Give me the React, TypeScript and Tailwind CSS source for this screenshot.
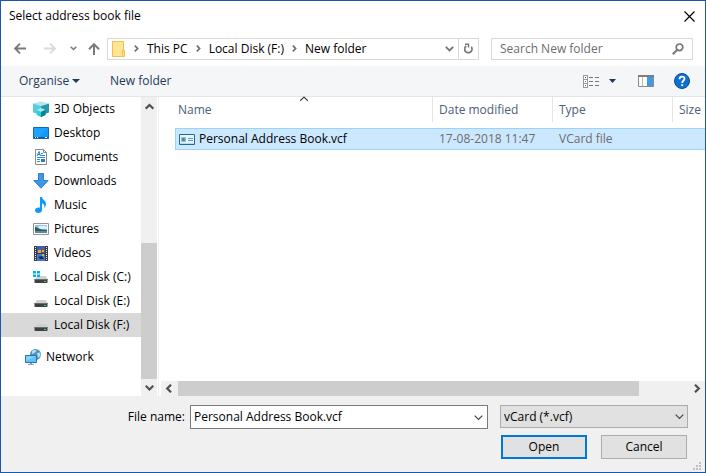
import type { ReactNode } from 'react'

interface Place {
  name: string
  icon: ReactNode
  selected?: boolean
}

const crumbs = ['This PC', 'Local Disk (F:)', 'New folder']

const files = [
  { name: 'Personal Address Book.vcf', modified: '17-08-2018 11:47', type: 'VCard file', size: '' },
]

function ObjectsIcon() {
  return (
    <svg className="h-4 w-4" viewBox="0 0 16 16" aria-hidden="true">
      <path d="M0 2.500 8 .500l8 2L8 5z" fill="#b4e6ee" />
      <path d="M0 2.500 8 5v11l-4-2V12.500L0 11.500z" fill="#5ccbdb" />
      <path d="M16 2.500 8 5v11l4.500-2v-1.500l3.500-1z" fill="#2299ae" />
      <path d="M3.500 9 8 7l4.500 2L8 11z" fill="#a5ecf1" />
      <path d="M3.500 9 8 11v5l-4.500-2.200z" fill="#2cd0dd" />
      <path d="M12.500 9 8 11v5l4.500-2.200z" fill="#077f92" />
    </svg>
  )
}

function DesktopIcon() {
  return (
    <svg className="h-4 w-4" viewBox="0 0 16 16" aria-hidden="true">
      <path d="M.5 2.500h15v11H.5z" fill="#1ea2ff" stroke="#0f6cb4" />
      <path d="M15 3v9H6z" fill="#0b8ef0" opacity=".5" />
      <path d="M1 12h14v1H1z" fill="#0b5a9c" />
      <path d="M2 12h1v1H2zM4 12h1v1H4zM12 12h2v1h-2z" fill="#fff" />
    </svg>
  )
}

function DocumentsIcon() {
  return (
    <svg className="h-4 w-4" viewBox="0 0 16 16" aria-hidden="true">
      <path d="M2.500.500h8l3 3v12h-11z" fill="#fff" stroke="#8a8a8a" />
      <path d="M10.500.500v3h3" fill="none" stroke="#8a8a8a" />
      <path d="M4 7l2-4.500L7.500 7M5 5.500h2" fill="none" stroke="#1f84d6" />
      <path d="M8 4.500h2M8 6.500h4M4 8.500h8M4 10.500h3M4 12.500h3" stroke="#2f8fdc" />
      <path d="M8 10h4v3H8z" fill="#2a7ab8" />
    </svg>
  )
}

function DownloadsIcon() {
  return (
    <svg className="h-4 w-4" viewBox="0 0 16 16" aria-hidden="true">
      <path d="M5.500.500h5v7h4.700L8 15.200.8 7.500h4.700z" fill="#3d97e6" stroke="#2f84cc" />
    </svg>
  )
}

function MusicIcon() {
  return (
    <svg className="h-4 w-4" viewBox="0 0 16 16" aria-hidden="true">
      <path
        d="M7 0h2c.2 2.500 4 3.500 4 7 0 1.800-.8 3-1.800 4 .6-2.500 0-4-2.200-4.700V13c0 1.800-1.500 3-3.600 3S2 15 2 13.300 3.600 10.500 5.500 10.500c.6 0 1 .1 1.500.3z"
        fill="#0f9bf5"
      />
    </svg>
  )
}

function PicturesIcon() {
  return (
    <svg className="h-4 w-4" viewBox="0 0 16 16" aria-hidden="true">
      <path d="M.5 2.500h15v11H.5z" fill="#fff" stroke="#949494" />
      <path d="M2 4h12v8H2z" fill="#8cc4f2" />
      <path d="M5 5.500c3-1 6-1 9 0V8H6z" fill="#dcefff" />
      <path d="M2 6c3 .5 4 2 7 2.500l5 .5v1H2z" fill="#2f5f4f" />
      <path d="M2 10h12v2H2z" fill="#5a86a8" />
    </svg>
  )
}

function VideosIcon() {
  return (
    <svg className="h-4 w-4" viewBox="0 0 16 16" aria-hidden="true">
      <path d="M1 1h14v15H1z" fill="#3b3b3b" />
      <path d="M4 1h8v7H4z" fill="#2f62c4" />
      <path d="M4 9h8v7H4z" fill="#3c78dc" />
      <path d="M5 5h3v3H5zM9 9h2v2H9zM9 5h2v2H9z" fill="#d9b23a" />
      <path d="M8 3h3v2H8z" fill="#b0432f" />
      <path d="M5 12l4-1 2 3H7z" fill="#1b2c4f" />
      <path d="M2.500 2v14M13.500 2v14" stroke="#eee" strokeDasharray="1 1" />
    </svg>
  )
}

function DiskIcon({ system }: { system?: boolean }) {
  return (
    <svg className="h-4 w-4" viewBox="0 0 16 16" aria-hidden="true">
      <path d="M4 7h9l2 3.500H2z" fill="#cfd0d3" />
      <path d="M1.500 10h13v3.500l-.5.500H2l-.5-.500z" fill="#3f4144" />
      <path d="M1.500 10h13v1h-13z" fill="#6b6d70" />
      <path d="M11 12h2v1h-2z" fill="#2fe04a" />
      {system && (
        <path d="M0 2h3v2.500H0zM4 2h3v2.500H4zM0 5.500h3V8H0zM4 5.500h3V8H4z" fill="#00b3f0" />
      )}
    </svg>
  )
}

function NetworkIcon() {
  return (
    <svg className="h-4 w-4" viewBox="0 0 16 16" aria-hidden="true">
      <circle cx="10.500" cy="5.500" r="5.500" fill="#4f94bd" />
      <path d="M7 2c2-1.500 4-1 4.500 0L9.500 4 7 5zM12 4l3-.5.5 3L13 9z" fill="#b9dcec" />
      <path d="M.5 6.500h11v7H.5z" fill="#5fc0fb" stroke="#2173b0" />
      <path d="M1 7h10L1 12z" fill="#a4dcff" opacity=".6" />
      <path d="M5 14h2v1H5zM3 15h6v1H3z" fill="#8aa4b5" />
    </svg>
  )
}

function CardIcon() {
  return (
    <svg className="h-4 w-4 shrink-0" viewBox="0 0 16 16" aria-hidden="true">
      <path d="M.5 3.500h15v10H.5z" fill="#e6f5fc" stroke="#1d6c93" />
      <path d="M1 12h14v1H1z" fill="#b5dcee" />
      <path d="M2 6h5v5H2z" fill="#8fc0dc" />
      <circle cx="4.500" cy="8.500" r="1.500" fill="#5b7c74" />
      <path d="M9 7.500h5M9 9.500h5" stroke="#5ba0c4" />
    </svg>
  )
}

const chevronPoints = {
  up: '0.7,5.700 4.500,2 8.300,5.700',
  down: '0.7,2.700 4.500,6.500 8.300,2.700',
  left: '6,0.700 2.200,4.500 6,8.300',
  right: '3,0.700 6.800,4.500 3,8.300',
}

function Chevron({ direction, bold, className }: { direction: keyof typeof chevronPoints; bold?: boolean; className?: string }) {
  return (
    <svg className={className} width="9" height="9" viewBox="0 0 9 9" aria-hidden="true">
      <polyline points={chevronPoints[direction]} fill="none" stroke="currentColor" strokeWidth={bold ? 2.200 : 1.200} />
    </svg>
  )
}

const places: Place[] = [
  { name: '3D Objects', icon: <ObjectsIcon /> },
  { name: 'Desktop', icon: <DesktopIcon /> },
  { name: 'Documents', icon: <DocumentsIcon /> },
  { name: 'Downloads', icon: <DownloadsIcon /> },
  { name: 'Music', icon: <MusicIcon /> },
  { name: 'Pictures', icon: <PicturesIcon /> },
  { name: 'Videos', icon: <VideosIcon /> },
  { name: 'Local Disk (C:)', icon: <DiskIcon system /> },
  { name: 'Local Disk (E:)', icon: <DiskIcon /> },
  { name: 'Local Disk (F:)', icon: <DiskIcon />, selected: true },
]

function TitleBar() {
  return (
    <header className="flex h-[30px] items-center justify-between pl-2 pr-[10px]">
      <h1>Select address book file</h1>
      <button type="button" aria-label="Close">
        <svg className="h-[11px] w-[11px]" viewBox="0 0 11 11" aria-hidden="true">
          <path d="M.5.500l10 10M10.500.500l-10 10" stroke="#000" strokeWidth="1.200" />
        </svg>
      </button>
    </header>
  )
}

function AddressRow() {
  return (
    <div className="flex h-[35px] items-center pl-[13px] pr-3">
      <nav className="flex w-[93px] shrink-0 items-center text-[#7a7a7a]" aria-label="History">
        <button type="button" aria-label="Back">
          <svg className="h-[11px] w-3" viewBox="0 0 12 11" aria-hidden="true">
            <path d="M12 5.500H1.500M6 .700 1.200 5.500 6 10.300" fill="none" stroke="currentColor" strokeWidth="1.900" />
          </svg>
        </button>
        <button type="button" aria-label="Forward" className="ml-[18px] text-[#dadada]" disabled>
          <svg className="h-[11px] w-3" viewBox="0 0 12 11" aria-hidden="true">
            <path d="M0 5.500h10.500M6 .700l4.800 4.800L6 10.300" fill="none" stroke="currentColor" strokeWidth="1.900" />
          </svg>
        </button>
        <button type="button" aria-label="Recent locations" className="ml-[14px]">
          <svg className="h-[5px] w-[7px]" viewBox="0 0 7 5" aria-hidden="true">
            <path d="M.7.700l2.800 2.800L6.300.700" fill="none" stroke="currentColor" strokeWidth="1.500" />
          </svg>
        </button>
        <button type="button" aria-label="Up" className="ml-[11px]">
          <svg className="h-3 w-3" viewBox="0 0 12 12" aria-hidden="true">
            <path d="M6 12V1.500M1 6.200l5-5 5 5" fill="none" stroke="currentColor" strokeWidth="2" />
          </svg>
        </button>
      </nav>

      <div className="flex h-[22px] min-w-0 flex-1 items-center border border-[#d9d9d9] bg-white pl-1">
        <svg className="h-4 w-[14px] shrink-0" viewBox="0 0 14 16" aria-hidden="true">
          <path d="M.5.500h11v15H.5z" fill="#ffe594" stroke="#edc14b" />
          <path d="M10.500 9.500h2v6h-2z" fill="#ffe594" stroke="#edc14b" />
        </svg>
        <ol className="flex flex-1 items-center whitespace-nowrap">
          {crumbs.map((crumb) => (
            <li key={crumb} className="flex items-center">
              <svg className="mx-2 h-[7px] w-[5px] text-[#6f6f6f]" viewBox="0 0 5 7" aria-hidden="true">
                <path d="M.8.700l2.800 2.800L.8 6.300" fill="none" stroke="currentColor" strokeWidth="1.700" />
              </svg>
              <a href="#">{crumb}</a>
            </li>
          ))}
        </ol>
        <button type="button" aria-label="Previous locations" className="flex h-full w-[19px] items-center justify-center border-r border-[#d9d9d9] text-[#777]">
          <svg className="h-[6px] w-[9px]" viewBox="0 0 9 6" aria-hidden="true">
            <path d="M.8.800l3.700 3.700L8.200.800" fill="none" stroke="currentColor" strokeWidth="1.900" />
          </svg>
        </button>
        <button type="button" aria-label="Refresh" className="flex h-full w-[19px] items-center justify-center text-[#777]">
          <svg className="h-[11px] w-[9px]" viewBox="0 0 9 11" aria-hidden="true">
            <path d="M2.200 3A3.700 3.700 0 1 0 7.300 3.800" fill="none" stroke="currentColor" strokeWidth="1.700" />
            <path d="M4.500.800v3.700M1 1.200h3.700" fill="none" stroke="currentColor" strokeWidth="1.500" />
          </svg>
        </button>
      </div>

      <label className="ml-3 flex h-[22px] w-[202px] items-center border border-[#d9d9d9] bg-white px-2">
        <input
          type="search"
          aria-label="Search New folder"
          placeholder="Search New folder"
          className="min-w-0 flex-1 bg-transparent outline-none placeholder:text-[#6d6d6d]"
        />
        <svg className="h-3 w-3 text-[#777]" viewBox="0 0 12 12" aria-hidden="true">
          <circle cx="7.500" cy="4.300" r="3.300" fill="none" stroke="currentColor" strokeWidth="1.700" />
          <path d="M5 7 .800 11.200" stroke="currentColor" strokeWidth="2" />
        </svg>
      </label>
    </div>
  )
}

function Toolbar() {
  return (
    <div className="flex h-[31px] items-center border-b border-[#e5e5e5] bg-[#f5f6f7] pl-[18px] pr-[15px] text-[#1e395b]">
      <button type="button" className="flex w-[91px] items-center gap-[3px]">
        Organise
        <svg className="h-1 w-2" viewBox="0 0 8 4" aria-hidden="true">
          <path d="M0 0h8L4 4z" fill="currentColor" />
        </svg>
      </button>
      <button type="button">New folder</button>
      <div className="ml-auto flex items-center">
        <button type="button" aria-label="Change your view" className="flex items-center gap-[9px]">
          <svg className="h-[13px] w-[17px]" viewBox="0 0 17 13" shapeRendering="crispEdges" aria-hidden="true">
            <path d="M.5.500h4v12h-4zM.5 4.500h4M.5 8.500h4" fill="#fff" stroke="#999" />
            <path d="M2 2h1v1H2z" fill="#444" />
            <path d="M2 6h1v1H2z" fill="#3385d6" />
            <path d="M2 10h1v1H2z" fill="#c33c1e" />
            <path d="M6 2.500h4M12 2.500h4M6 6.500h4M12 6.500h4M6 10.500h4M12 10.500h4" stroke="#777" />
          </svg>
          <svg className="h-1 w-[7px]" viewBox="0 0 7 4" aria-hidden="true">
            <path d="M0 0h7L3.500 4z" fill="currentColor" />
          </svg>
        </button>
        <button type="button" aria-label="Preview pane" className="ml-[22px]">
          <svg className="h-3 w-4" viewBox="0 0 16 12" aria-hidden="true">
            <path d="M.5.500h15v11H.5z" fill="#fff" stroke="#8a8a8a" />
            <path d="M0 0h16v2H0z" fill="#7d7d7d" />
            <path d="M4.500 2v9" stroke="#bbb" />
            <path d="M9 2h6v9H9z" fill="#3d9be9" />
          </svg>
        </button>
        <button type="button" aria-label="Help" className="ml-5">
          <svg className="h-4 w-4" viewBox="0 0 16 16" aria-hidden="true">
            <circle cx="8" cy="8" r="7.500" fill="#0a6fd2" stroke="#0a4f8f" />
            <path d="M5.500 6.200C5.500 4.500 6.600 3.700 8 3.700s2.500.8 2.500 2.100C10.500 7.500 8.200 7.600 8.200 10" fill="none" stroke="#fff" strokeWidth="1.800" />
            <circle cx="8.200" cy="12.200" r="1.100" fill="#fff" />
          </svg>
        </button>
      </div>
    </div>
  )
}

function Sidebar() {
  return (
    <aside className="flex w-[158px] shrink-0 border-r border-[#f0f0f0]">
      <nav className="flex-1" aria-label="Places">
        <ul>
          {places.map((place) => (
            <li key={place.name}>
              <a
                href="#"
                className={`flex h-6 items-center gap-[5px] pl-8 whitespace-nowrap ${place.selected ? 'bg-[#d9d9d9]' : ''}`}
              >
                {place.icon}
                {place.name}
              </a>
            </li>
          ))}
          <li className="mt-2">
            <a href="#" className="flex h-6 items-center gap-[5px] pl-6">
              <NetworkIcon />
              Network
            </a>
          </li>
        </ul>
      </nav>
      <div className="mr-[1px] flex w-4 flex-col bg-[#f0f0f0] text-[#505050]">
        <button type="button" aria-label="Scroll up" className="flex h-5 items-center justify-center">
          <Chevron direction="up" bold />
        </button>
        <div className="flex flex-1 flex-col justify-end">
          <div className="h-[136px] bg-[#cdcdcd]" />
        </div>
        <button type="button" aria-label="Scroll down" className="flex h-[17px] items-center justify-center">
          <Chevron direction="down" bold />
        </button>
      </div>
    </aside>
  )
}

function FileList() {
  return (
    <section className="flex min-w-0 flex-1 flex-col pl-[2px]">
      <div className="flex-1 pl-[14px]">
        <table className="w-full table-fixed border-separate border-spacing-0 text-left">
          <thead className="text-[#4c607a]">
            <tr className="h-[31px] align-top">
              <th className="relative p-0 font-normal">
                <div className="flex h-[25px] items-center border-r border-[#e5e5e5] pl-[3px]">Name</div>
                <Chevron direction="up" className="absolute -top-[2px] left-1/2 -translate-x-1/2 text-[#444]" />
              </th>
              <th className="w-[120px] p-0 font-normal">
                <div className="flex h-[25px] items-center border-r border-[#e5e5e5] pl-[6px]">Date modified</div>
              </th>
              <th className="w-[120px] p-0 font-normal">
                <div className="flex h-[25px] items-center border-r border-[#e5e5e5] pl-[6px]">Type</div>
              </th>
              <th className="w-8 p-0 font-normal">
                <div className="flex h-[25px] items-center pl-[6px]">Size</div>
              </th>
            </tr>
          </thead>
          <tbody>
            {files.map((file) => (
              <tr key={file.name} className="h-[22px] bg-[#cce8ff] text-[#6d6d6d]">
                <td className="border-y border-l border-[#99d1ff] p-0 pl-[3px] text-black">
                  <div className="flex items-center gap-1 whitespace-nowrap">
                    <CardIcon />
                    {file.name}
                  </div>
                </td>
                <td className="border-y border-[#99d1ff] p-0 pl-[6px] whitespace-nowrap">{file.modified}</td>
                <td className="border-y border-[#99d1ff] p-0 pl-[6px]">{file.type}</td>
                <td className="border-y border-[#99d1ff] p-0">{file.size}</td>
              </tr>
            ))}
          </tbody>
        </table>
      </div>
      <div className="flex h-[15px] bg-[#f0f0f0] text-[#505050]">
        <button type="button" aria-label="Scroll left" className="flex w-[17px] items-center justify-center">
          <Chevron direction="left" bold />
        </button>
        <div className="flex-1 pr-[49px]">
          <div className="h-full bg-[#cdcdcd]" />
        </div>
        <button type="button" aria-label="Scroll right" className="flex w-[17px] items-center justify-center">
          <Chevron direction="right" bold />
        </button>
      </div>
    </section>
  )
}

function Footer() {
  return (
    <footer className="relative bg-[#f0f0f0] pt-[9px] pr-[17px] pb-[13px]">
      <div className="flex items-start">
        <label htmlFor="file-name" className="w-[189px] shrink-0 pr-[5px] text-right leading-6">
          File name:
        </label>
        <div className="flex h-6 min-w-0 flex-1 items-center border border-[#7a7a7a] bg-white pr-1 pl-[3px]">
          <input
            id="file-name"
            type="text"
            defaultValue="Personal Address Book.vcf"
            className="min-w-0 flex-1 bg-transparent outline-none"
          />
          <button type="button" aria-label="Show file names">
            <Chevron direction="down" className="text-[#444]" />
          </button>
        </div>
        <div className="relative ml-3 w-[188px]">
          <select aria-label="File type" className="h-[23px] w-full appearance-none border border-[#acacac] bg-[#e1e1e1] pl-[3px]">
            <option>vCard (*.vcf)</option>
          </select>
          <Chevron direction="down" className="pointer-events-none absolute top-[7px] right-1 text-[#444]" />
        </div>
      </div>
      <div className="mt-[6px] flex justify-end gap-[14px] pr-[1px]">
        <button type="button" className="h-6 w-[86px] border-2 border-[#0078d7] bg-[#e1e1e1]">Open</button>
        <button type="button" className="h-6 w-[86px] border border-[#adadad] bg-[#e1e1e1]">Cancel</button>
      </div>
      <svg className="absolute right-1 bottom-[2px] h-2 w-2" viewBox="0 0 8 8" aria-hidden="true">
        <path d="M6 0h2v2H6zM3 3h2v2H3zM6 3h2v2H6zM0 6h2v2H0zM3 6h2v2H3zM6 6h2v2H6z" fill="#bfbfbf" />
      </svg>
    </footer>
  )
}

export default function App() {
  return (
    <main className="flex min-h-screen flex-col border border-[#1b57b0] bg-white font-['Open_Sans','Noto_Sans',sans-serif] text-[12px] leading-4 text-black">
      <TitleBar />
      <AddressRow />
      <Toolbar />
      <div className="flex flex-1">
        <Sidebar />
        <FileList />
      </div>
      <Footer />
    </main>
  )
}
